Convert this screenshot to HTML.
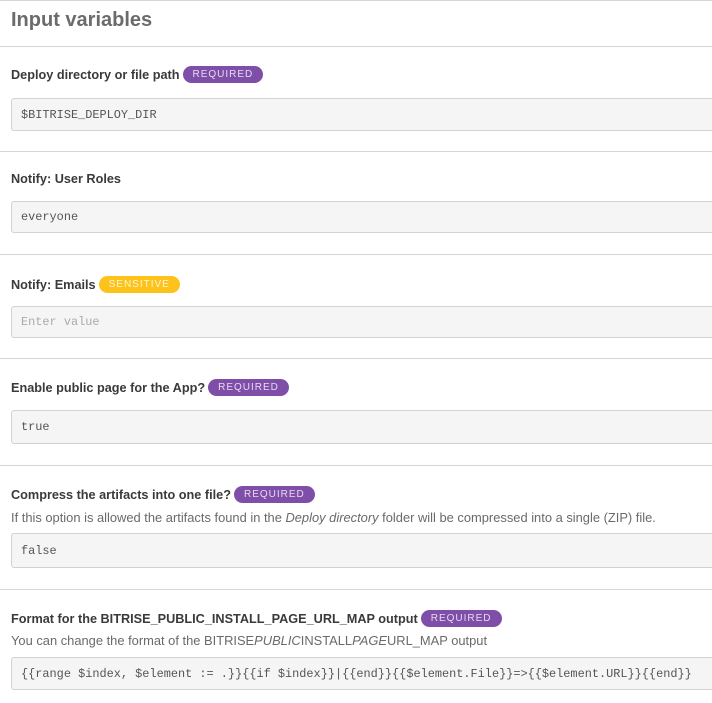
<!DOCTYPE html>
<html><head><style>
*{box-sizing:border-box;margin:0;padding:0}
body{width:712px;height:703px;overflow:hidden;background:#fff;font-family:"Liberation Sans",sans-serif;color:#3a3a3a;position:relative}
.line{position:absolute;left:0;width:712px;height:1px;background:#d6d6d6}
h1{position:absolute;left:11px;top:9px;font-size:20px;font-weight:bold;color:#6b6b6b}
.lbl{position:absolute;left:11px;font-size:12.7px;font-weight:bold;color:#3a3a3a;white-space:nowrap;display:flex;align-items:center}
.b{display:inline-block;margin-left:3px;height:17px;line-height:17px;border-radius:9px;padding:0 10px;font-size:10px;letter-spacing:1px;font-weight:normal;color:#e6dcf0;background:#7f4ea8}
.b.y{background:#fdc31a;color:#fff6d8}
.desc{position:absolute;left:11px;font-size:12.9px;color:#6a6a6a;white-space:nowrap}
.inp{position:absolute;left:11px;width:720px;background:#f5f5f5;border:1px solid #d2d2d2;border-radius:3px;font-family:"Liberation Mono",monospace;font-size:11.9px;color:#555;padding-left:9px;display:flex;align-items:center;white-space:nowrap}
</style></head><body>
<div class="line" style="top:0"></div>
<h1>Input variables</h1>
<div class="line" style="top:46px"></div>

<div class="lbl" style="top:66px">Deploy directory or file path<span class="b">REQUIRED</span></div>
<div class="inp" style="top:98px;height:33px">$BITRISE_DEPLOY_DIR</div>
<div class="line" style="top:151px"></div>

<div class="lbl" style="top:172px">Notify: User Roles</div>
<div class="inp" style="top:201px;height:32px">everyone</div>
<div class="line" style="top:254px"></div>

<div class="lbl" style="top:276px">Notify: Emails<span class="b y">SENSITIVE</span></div>
<div class="inp" style="top:306px;height:32px;color:#aaa">Enter value</div>
<div class="line" style="top:358px"></div>

<div class="lbl" style="top:379px">Enable public page for the App?<span class="b">REQUIRED</span></div>
<div class="inp" style="top:410px;height:34px">true</div>
<div class="line" style="top:465px"></div>

<div class="lbl" style="top:486px">Compress the artifacts into one file?<span class="b">REQUIRED</span></div>
<div class="desc" style="top:510px">If this option is allowed the artifacts found in the <i>Deploy directory</i> folder will be compressed into a single (ZIP) file.</div>
<div class="inp" style="top:533px;height:35px">false</div>
<div class="line" style="top:589px"></div>

<div class="lbl" style="top:610px">Format for the BITRISE_PUBLIC_INSTALL_PAGE_URL_MAP output<span class="b">REQUIRED</span></div>
<div class="desc" style="top:633px">You can change the format of the BITRISE<i>PUBLIC</i>INSTALL<i>PAGE</i>URL_MAP output</div>
<div class="inp" style="top:657px;height:33px">{{range $index, $element := .}}{{if $index}}|{{end}}{{$element.File}}=&gt;{{$element.URL}}{{end}}</div>
</body></html>
